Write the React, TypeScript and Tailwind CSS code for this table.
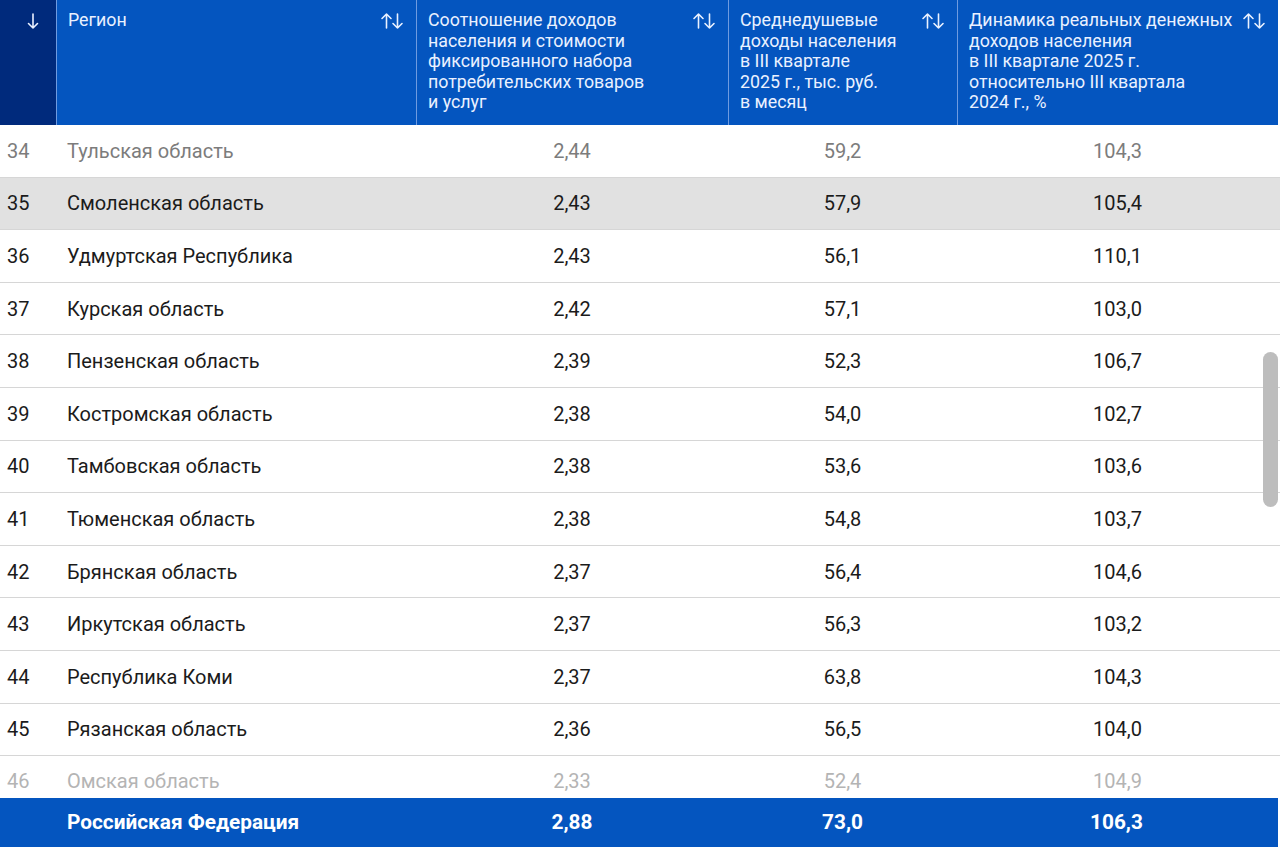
import React from "react";

const rows = [
  { n: 34, name: "Тульская область", a: "2,44", b: "59,2", c: "104,3", tone: "fade" },
  { n: 35, name: "Смоленская область", a: "2,43", b: "57,9", c: "105,4", tone: "hover" },
  { n: 36, name: "Удмуртская Республика", a: "2,43", b: "56,1", c: "110,1" },
  { n: 37, name: "Курская область", a: "2,42", b: "57,1", c: "103,0" },
  { n: 38, name: "Пензенская область", a: "2,39", b: "52,3", c: "106,7" },
  { n: 39, name: "Костромская область", a: "2,38", b: "54,0", c: "102,7" },
  { n: 40, name: "Тамбовская область", a: "2,38", b: "53,6", c: "103,6" },
  { n: 41, name: "Тюменская область", a: "2,38", b: "54,8", c: "103,7" },
  { n: 42, name: "Брянская область", a: "2,37", b: "56,4", c: "104,6" },
  { n: 43, name: "Иркутская область", a: "2,37", b: "56,3", c: "103,2" },
  { n: 44, name: "Республика Коми", a: "2,37", b: "63,8", c: "104,3" },
  { n: 45, name: "Рязанская область", a: "2,36", b: "56,5", c: "104,0" },
  { n: 46, name: "Омская область", a: "2,33", b: "52,4", c: "104,9", tone: "last" },
];

const grid = "grid grid-cols-[56px_360px_312px_229px_1fr]";

const SortIcon = () => (
  <svg width="24" height="18" viewBox="0 0 24 18" fill="none" stroke="currentColor" strokeWidth="1.6" strokeLinecap="round" strokeLinejoin="round">
    <path d="M6.5 16V2M2 6.5l4.5-4.5 4.5 4.5" />
    <path d="M17.5 2v14M13 11.5l4.5 4.5 4.5-4.5" />
  </svg>
);

const DownIcon = () => (
  <svg width="14" height="18" viewBox="0 0 14 18" fill="none" stroke="currentColor" strokeWidth="1.6" strokeLinecap="round" strokeLinejoin="round">
    <path d="M7 2v14M2.5 11.5L7 16l4.5-4.5" />
  </svg>
);

const HeadCell = ({ lines }: { lines: string[] }) => (
  <div className="flex justify-between border-l border-[#6f9be0] pl-[11px] pr-3 pt-[10px]">
    <div className="text-[17.8px] leading-[20.6px] text-[#eaf1ff]">
      {lines.map((l, i) => (
        <div key={i}>{l}</div>
      ))}
    </div>
    <div className="pt-[2px] text-[#eaf1ff]">
      <SortIcon />
    </div>
  </div>
);

export default function App() {
  return (
    <div className="relative h-[847px] w-[1280px] overflow-hidden bg-white font-['Roboto',sans-serif]">
      <div className={`${grid} h-[125px] w-[1278px] bg-[#0455bf]`}>
        <div className="flex justify-center bg-[#002a7c] pl-[9px] pt-[12px] text-[#eaf1ff]">
          <DownIcon />
        </div>
        <HeadCell lines={["Регион"]} />
        <HeadCell lines={["Соотношение доходов", "населения и стоимости", "фиксированного набора", "потребительских товаров", "и услуг"]} />
        <HeadCell lines={["Среднедушевые", "доходы населения", "в III квартале", "2025 г., тыс. руб.", "в месяц"]} />
        <HeadCell lines={["Динамика реальных денежных", "доходов населения", "в III квартале 2025 г.", "относительно III квартала", "2024 г., %"]} />
      </div>

      <div className="flex flex-col">
        {rows.map((r) => {
          const color =
            r.tone === "fade" ? "text-[#7c7c7c]" : r.tone === "last" ? "text-[#b4b4b4]" : "text-[#1b1b1b]";
          const bg = r.tone === "hover" ? "bg-[#e1e1e1]" : "bg-white";
          const border = r.tone === "last" ? "" : "border-b border-[#d6d6d6]";
          const h = r.tone === "last" ? "h-[42px] pt-[8px]" : "h-[52.6px]";
          return (
            <div key={r.n} className={`${grid} ${bg} ${border} ${color} ${h} items-center text-[20px]`}>
              <div className="pl-[7px]">{r.n}</div>
              <div className="pl-[11px]">{r.name}</div>
              <div className="text-center">{r.a}</div>
              <div className="text-center">{r.b}</div>
              <div className="pr-[2px] text-center">{r.c}</div>
            </div>
          );
        })}
      </div>

      <div className={`${grid} absolute bottom-0 left-0 h-[49px] w-[1278px] items-center bg-[#0455bf] text-[20.8px] font-bold text-white`}>
        <div />
        <div className="pl-[11px]">Российская Федерация</div>
        <div className="text-center">2,88</div>
        <div className="text-center">73,0</div>
        <div className="pr-[2px] text-center">106,3</div>
      </div>

      <div className="absolute left-[1263px] top-[352px] h-[155px] w-[15px] rounded-full bg-[#bdbdbd]" />
    </div>
  );
}
